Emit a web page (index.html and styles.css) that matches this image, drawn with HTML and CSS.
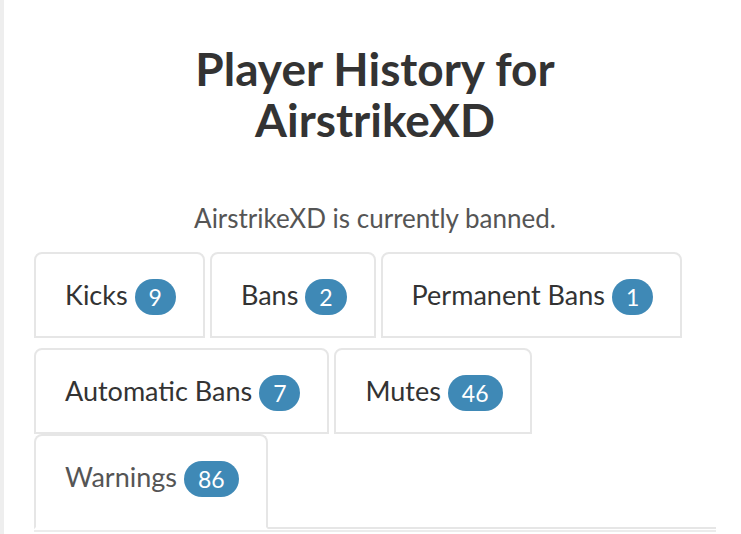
FILE: index.html
```html
<!DOCTYPE html>
<html>
<head>
<meta charset="utf-8">
<title>Player History</title>
<link rel="stylesheet" href="styles.css">
</head>
<body>
<div class="page">
  <h1 class="title">Player History for AirstrikeXD</h1>
  <p class="status">AirstrikeXD is currently banned.</p>
  <ul class="tabs">
    <li class="tab row-first"><a href="#">Kicks <span class="badge">9</span></a></li>
    <li class="tab row-first"><a href="#">Bans <span class="badge">2</span></a></li>
    <li class="tab row-first"><a href="#">Permanent Bans <span class="badge">1</span></a></li>
    <li class="tab"><a href="#">Automatic Bans <span class="badge">7</span></a></li>
    <li class="tab"><a href="#">Mutes <span class="badge">46</span></a></li>
    <li class="tab active"><a href="#">Warnings <span class="badge">86</span></a></li>
  </ul>
  <div class="tab-content"></div>
</div>
</body>
</html>
```
FILE: styles.css
```css
html, body {
  margin: 0;
  padding: 0;
  background: #fff;
}
body {
  font-family: Lato, "Open Sans", sans-serif;
  color: #333;
  border-left: 4px solid #eeeeee;
  min-height: 100vh;
  box-sizing: border-box;
}
.page {
  padding: 0 25px 0 30px;
}
.title {
  margin: 0 auto;
  padding-top: 43px;
  width: 420px;
  text-align: center;
  font-size: 46px;
  line-height: 51px;
  font-weight: 700;
  color: #333;
}
.status {
  margin: 0;
  padding-top: 56px;
  text-align: center;
  font-size: 26px;
  line-height: 34px;
  color: #555;
}
.tabs {
  list-style: none;
  margin: 17px 0 0 0;
  padding: 0;
  display: flex;
  flex-wrap: wrap;
  border-bottom: 2px solid #e6e6e6;
}
.tab {
  margin-right: 5px;
  margin-bottom: 0;
}
.tab.row-first {
  margin-bottom: 10px;
}
.tab a {
  display: block;
  padding: 20px 27px 20px 29px;
  font-size: 27px;
  line-height: 41px;
  color: #333;
  text-decoration: none;
  border: 2px solid #e6e6e6;
  border-radius: 8px 8px 0 0;
}
.tab.active {
  margin-bottom: -2px;
}
.tab.active a {
  color: #555;
  border-bottom-color: #fff;
  padding-bottom: 29px;
}
.badge {
  display: inline-block;
  min-width: 12px;
  padding: 6px 14px;
  font-size: 23px;
  line-height: 24px;
  color: #fff;
  background: #3f89b6;
  border-radius: 20px;
  text-align: center;
  vertical-align: middle;
  position: relative;
  top: -1px;
}
.tab-content {
  border-top: 2px solid #ececec;
  margin-top: 1px;
}
```
